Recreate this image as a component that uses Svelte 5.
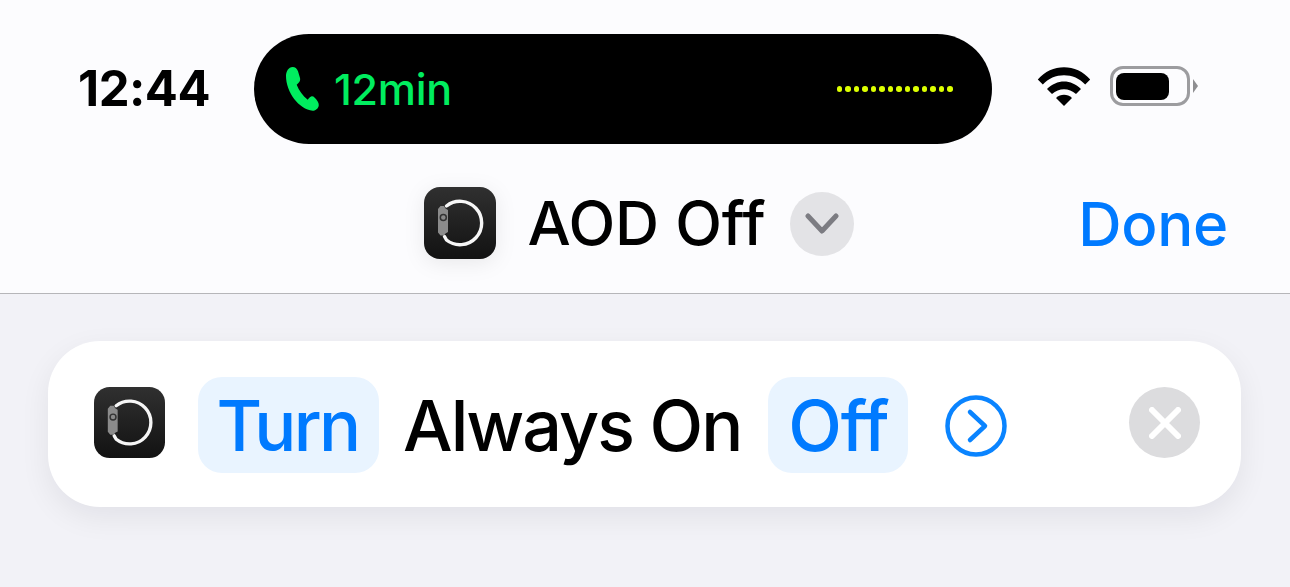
<script>
  const dots = Array.from({ length: 14 });
</script>

{#snippet watchIcon(size)}
  <svg class="watch" width={size} height={size} viewBox="0 0 72 72" aria-hidden="true">
    <defs>
      <linearGradient id="watch-bg" x1="0" y1="0" x2="0" y2="1">
        <stop offset="0" stop-color="#303030" />
        <stop offset="1" stop-color="#121212" />
      </linearGradient>
    </defs>
    <rect width="72" height="72" rx="16" fill="url(#watch-bg)" />
    <path d="M22.500 19A21.700 21.700 0 1 1 22.500 53L20.500 49.500" fill="none" stroke="#f6f6f6" stroke-width="3.400" stroke-linecap="round" stroke-linejoin="round" />
    <path d="M16.500 19h3.500l1.500 2.500l2.500 1.500v22l-2.500 1.500l-1.500 2h-3.500l-2.500-3V22z" fill="#8b8b8b" />
    <circle cx="19.300" cy="30.500" r="3" fill="none" stroke="#333" stroke-width="1.500" />
  </svg>
{/snippet}

<div class="screen">
  <header class="top">
    <div class="status">
      <span class="time">12:44</span>
      <div class="island">
        <svg width="33" height="44" viewBox="0 0 33 44" aria-hidden="true">
          <path fill="#00ed5f" d="M6.700 0C9 0 11 1.500 12 4.300L14 11C14.600 13.500 13.500 15.600 10.700 17.700C13 23.500 16.500 28.500 21.700 32.700C23 31 24.200 29.800 25.700 29.300C27.500 29 29.500 31 31.700 34.500C33.500 37.500 33 40.500 30.500 42.300C29 43.500 28 43.800 26.700 43.800C13 42.500 0 25 0 9C0 4.500 2.500 0 6.700 0Z" />
        </svg>
        <span class="duration">12min</span>
        <div class="dots">
          {#each dots as _}
            <i></i>
          {/each}
        </div>
      </div>
      <div class="indicators">
        <svg width="54" height="40" viewBox="0 0 54 40" aria-hidden="true">
          <path d="M0.800 13.500C14.500 -3 39.500 -3 53.200 13.500L48.200 18.600C37.500 6 16.500 6 5.800 18.600Z" />
          <path d="M10 23C20 13 34 13 44 23L39 28C32 21.500 22 21.500 15 28Z" />
          <path d="M19 32C23.500 27.700 30.500 27.700 35 32L27 40Z" />
        </svg>
        <div class="battery">
          <div class="battery-body"><span></span></div>
          <div class="battery-nub"></div>
        </div>
      </div>
    </div>
    <div class="nav">
      <div></div>
      <div class="title">
        {@render watchIcon(72)}
        <span class="title-text">AOD Off</span>
        <span class="chevron">
          <svg width="34" height="22" viewBox="0 0 34 22" aria-hidden="true">
            <path d="M3 3L17 18L31 3" fill="none" stroke="#7c7c82" stroke-width="5" stroke-linecap="round" stroke-linejoin="round" />
          </svg>
        </span>
      </div>
      <button class="done">Done</button>
    </div>
  </header>

  <main class="body">
    <div class="card">
      <span class="app">{@render watchIcon(71)}</span>
      <span class="token first">Turn</span>
      <span class="label">Always On</span>
      <span class="token">Off</span>
      <svg class="arrow" width="62" height="62" viewBox="0 0 62 62" aria-hidden="true">
        <circle cx="31" cy="31" r="28.500" fill="none" stroke="#0a84ff" stroke-width="4.500" />
        <path d="M25 17L40 31L25 45" fill="none" stroke="#0a84ff" stroke-width="4.500" stroke-linecap="round" stroke-linejoin="round" />
      </svg>
      <span class="close">
        <svg width="32" height="32" viewBox="0 0 32 32" aria-hidden="true">
          <path d="M3 3L29 29M29 3L3 29" stroke="#fff" stroke-width="6" stroke-linecap="round" />
        </svg>
      </span>
    </div>
  </main>
</div>

<style>
  :global(body) {
    margin: 0;
    background: #f2f2f7;
  }

  .screen {
    width: 1290px;
    height: 587px;
    overflow: hidden;
    font-family: Inter, "Liberation Sans", sans-serif;
    color: #000;
  }

  .top {
    height: 293px;
    background: #fcfcfe;
    border-bottom: 1px solid #b6b6b9;
    box-sizing: content-box;
  }

  .status {
    display: flex;
    align-items: center;
    height: 110px;
    padding: 34px 0 0 78px;
  }

  .time {
    width: 176px;
    font-size: 49px;
    font-weight: 650;
    letter-spacing: -0.500px;
    line-height: 1;
    margin-top: -2px;
  }

  .island {
    display: flex;
    align-items: center;
    box-sizing: border-box;
    width: 738px;
    height: 110px;
    padding: 0 39px 0 32px;
    background: #000;
    border-radius: 55px;
  }

  .duration {
    margin-left: 15px;
    font-size: 43px;
    font-weight: 500;
    letter-spacing: -0.300px;
    color: #00ed5f;
  }

  .dots {
    display: flex;
    gap: 3px;
    margin-left: auto;
  }

  .dots i {
    width: 5.540px;
    height: 5.540px;
    border-radius: 50%;
    background: #dcff00;
  }

  .indicators {
    display: flex;
    align-items: center;
    gap: 19px;
    margin: -6px 0 0 45px;
  }

  .indicators svg {
    fill: #000;
  }

  .battery {
    display: flex;
    align-items: center;
    gap: 3px;
  }

  .battery-body {
    box-sizing: border-box;
    width: 80px;
    height: 40px;
    padding: 4px 18px 3px 3px;
    border: 3px solid #9c9c9f;
    border-radius: 13px;
  }

  .battery-body span {
    display: block;
    height: 100%;
    background: #000;
    border-radius: 8px;
  }

  .battery-nub {
    width: 5px;
    height: 14px;
    background: #8e8e91;
    clip-path: polygon(0 0, 100% 50%, 0 100%);
  }

  .nav {
    display: grid;
    grid-template-columns: 1fr auto 1fr;
    align-items: center;
    height: 72px;
    margin-top: 43px;
  }

  .title {
    display: flex;
    align-items: center;
    margin: -1px 0 0 -12px;
  }

  .watch {
    display: block;
    flex-shrink: 0;
  }

  .title .watch {
    filter: drop-shadow(0 4px 10px rgba(0, 0, 0, 0.08));
  }

  .title-text {
    margin-left: 32px;
    font-size: 61px;
    font-weight: 540;
    letter-spacing: -0.100px;
  }

  .chevron {
    display: flex;
    align-items: center;
    justify-content: center;
    width: 64px;
    height: 64px;
    margin: 2px 0 0 25px;
    background: #e3e3e6;
    border-radius: 50%;
  }

  .done {
    justify-self: end;
    margin-right: 62px;
    padding: 0;
    background: none;
    border: none;
    font-family: inherit;
    font-size: 60px;
    font-weight: 540;
    letter-spacing: -0.300px;
    color: #007aff;
  }

  .body {
    padding: 47px 49px 0 48px;
  }

  .card {
    display: flex;
    align-items: center;
    height: 166px;
    padding: 0 41px 0 46px;
    background: #fff;
    border-radius: 52px;
    box-shadow: 0 10px 30px rgba(0, 0, 30, 0.07);
    font-size: 70px;
    font-weight: 450;
    letter-spacing: -2px;
  }

  .app {
    margin-top: -3px;
  }

  .token {
    display: flex;
    align-items: center;
    justify-content: center;
    height: 96px;
    padding: 0 20px;
    background: #e9f4ff;
    border-radius: 24px;
    color: #007aff;
    margin-top: 2px;
    letter-spacing: -1.300px;
  }

  .token.first {
    width: 181px;
    box-sizing: border-box;
    padding: 0 2px 0 0;
    margin-left: 33px;
    letter-spacing: -2.700px;
  }

  .label {
    margin: 2px 27px 0 24px;
  }

  .arrow {
    margin: 3px 0 0 37px;
  }

  .close {
    display: flex;
    align-items: center;
    justify-content: center;
    width: 71px;
    height: 71px;
    margin: -3px 0 0 auto;
    background: #dcdcde;
    border-radius: 50%;
  }
</style>
